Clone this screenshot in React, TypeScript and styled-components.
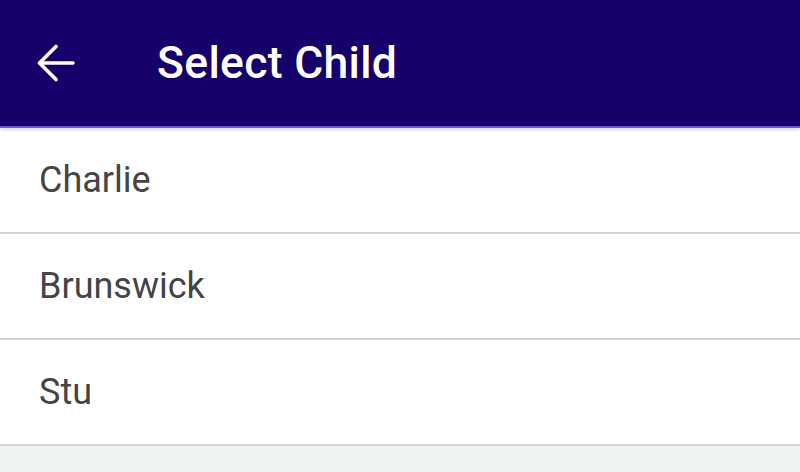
import styled, { createGlobalStyle } from 'styled-components';

const children = ['Charlie', 'Brunswick', 'Stu'];

function App() {
  return (
    <>
      <GlobalStyle />
      <Screen>
        <AppBar>
          <BackButton aria-label='Back'>
            <svg width='38' height='38' viewBox='0 0 38 38' fill='none'>
              <path
                d='M36 19H3M19 2.5L2.5 19 19 35.5'
                stroke='#fff'
                strokeWidth='3.6'
                strokeLinecap='round'
                strokeLinejoin='round'
              />
            </svg>
          </BackButton>
          <Title>Select Child</Title>
        </AppBar>
        <List>
          {children.map((name) => (
            <Row key={name}>{name}</Row>
          ))}
        </List>
      </Screen>
    </>
  );
}

const GlobalStyle = createGlobalStyle`
  html, body, #root {
    margin: 0;
    height: 100%;
  }
  body {
    font-family: Roboto, 'Noto Sans', sans-serif;
    background: #eff3f2;
  }
`;

const Screen = styled.div`
  display: flex;
  flex-direction: column;
  height: 100%;
`;

const AppBar = styled.header`
  height: 126px;
  display: flex;
  align-items: center;
  background: #16006a;
  border-bottom: 2px solid #6a5bd0;
  box-shadow: 0 2px 4px rgba(0, 0, 0, 0.15);
  position: relative;
  z-index: 1;
`;

const BackButton = styled.button`
  display: flex;
  align-items: center;
  justify-content: center;
  background: none;
  border: 0;
  padding: 0;
  margin-left: 37px;
  width: 38px;
  height: 38px;
`;

const Title = styled.h1`
  margin: 0 0 0 82px;
  color: #fff;
  font-size: 44.5px;
  font-weight: 500;
  letter-spacing: 0.3px;
`;

const List = styled.ul`
  list-style: none;
  margin: 0;
  padding: 0;
  background: #fff;
`;

const Row = styled.li`
  height: 104px;
  display: flex;
  align-items: center;
  padding-left: 39px;
  border-bottom: 2px solid #d4d4d4;
  color: #444;
  font-size: 36px;
`;

export default App;
